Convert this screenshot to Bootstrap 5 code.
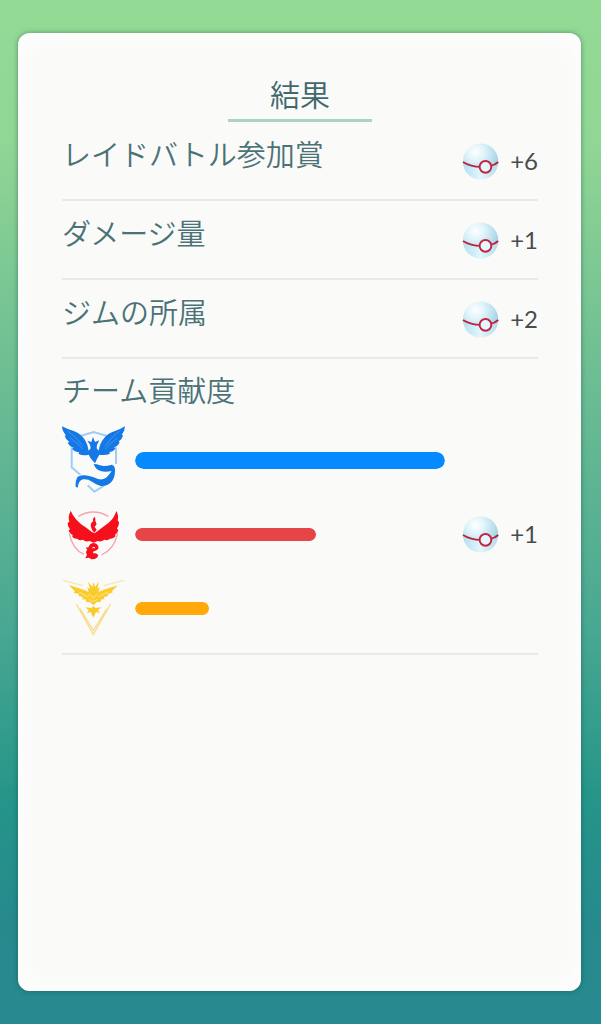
<!DOCTYPE html>
<html lang="ja">
<head>
<meta charset="utf-8">
<meta name="viewport" content="width=device-width, initial-scale=1">
<title>結果</title>
<link href="https://cdn.jsdelivr.net/npm/bootstrap@5.3.0/dist/css/bootstrap.min.css" rel="stylesheet">
<style>
  body {
    font-family: Lato, "Noto Sans CJK JP", sans-serif;
    background: linear-gradient(#93da95 0%, #90d694 14%, #6fbf93 35%, #4ba992 60%, #259589 78%, #268a8d 90%, #268a90 100%);
    padding: 33px 20px 33px 18px;
  }
  .result-card {
    border-radius: 12px;
    background: #fafaf9;
    padding: 40px 43px 40px 44px;
    box-shadow: 0 0 5px rgba(20, 70, 60, .5), inset 0 0 28px #fff;
  }
  .result-title {
    font-family: "Noto Sans CJK JP DemiLight", "Noto Sans CJK JP", sans-serif;
    font-size: 30px;
    line-height: 40px;
    font-weight: 350;
    color: #41686d;
    padding: 0 42px 6px;
    border-bottom: 3px solid #aed2c0;
  }
  .result-label {
    font-family: "Noto Sans CJK JP DemiLight", "Noto Sans CJK JP", sans-serif;
    font-size: 29px;
    line-height: 36px;
    font-weight: 350;
    color: #4b7277;
  }
  .result-row { min-height: 79px; border-bottom: 2px solid #e8eaea; }
  .result-row .result-label { padding-bottom: 16px; }
  .team-block { padding: 12px 0 8px; border-bottom: 2px solid #e8eaea; }
  .team-row { height: 74px; gap: 9px; }
  .reward { width: 76px; gap: 11px; font-size: 24px; color: #484c4e; }
  .team-row .reward { margin-left: 8px; }
  .track { height: 17px; background: none; border-radius: 9px; }
  .track-slim { height: 13px; }
  .track .progress-bar { border-radius: 9px; }
  .mystic { background: #058aff; }
  .valor { background: #e64547; }
  .instinct { background: #ffa90a; }
</style>
</head>
<body class="min-vh-100 d-flex">
<svg width="0" height="0" class="position-absolute" aria-hidden="true">
  <defs>
    <radialGradient id="shell" cx=".36" cy=".25" r=".8">
      <stop offset="0" stop-color="#fff"/>
      <stop offset=".3" stop-color="#e2f4fb"/>
      <stop offset=".7" stop-color="#b4dcea"/>
      <stop offset="1" stop-color="#8fc4da"/>
    </radialGradient>
    <linearGradient id="base" x1="0" y1="0" x2="1" y2="0">
      <stop offset="0" stop-color="#b5e0f0"/>
      <stop offset=".5" stop-color="#e3f6fc"/>
      <stop offset="1" stop-color="#b3dced"/>
    </linearGradient>
    <symbol id="ball" viewBox="0 0 38 38">
      <circle cx="19" cy="19" r="18" fill="url(#shell)"/>
      <path d="M1 20Q10 25 19 25L31 24Q35 22 37 20A18 18 0 0 1 1 20Z" fill="url(#base)"/>
      <path d="M1 20Q9 25 19 25M29 24Q34 23 37 20" fill="none" stroke="#b92442" stroke-width="2"/>
      <circle cx="24" cy="25" r="6" fill="#e6f6fc" stroke="#c22542" stroke-width="2"/>
    </symbol>
  </defs>
</svg>
<main class="result-card flex-grow-1">
  <header class="text-center"><h1 class="result-title d-inline-block mb-0 align-top">結果</h1></header>

  <section class="result-row d-flex align-items-center justify-content-between">
    <h2 class="result-label mb-0">レイドバトル参加賞</h2>
    <div class="reward d-flex align-items-center"><svg width="38" height="38" aria-hidden="true"><use href="#ball"/></svg><span>+6</span></div>
  </section>
  <section class="result-row d-flex align-items-center justify-content-between">
    <h2 class="result-label mb-0">ダメージ量</h2>
    <div class="reward d-flex align-items-center"><svg width="38" height="38" aria-hidden="true"><use href="#ball"/></svg><span>+1</span></div>
  </section>
  <section class="result-row d-flex align-items-center justify-content-between">
    <h2 class="result-label mb-0">ジムの所属</h2>
    <div class="reward d-flex align-items-center"><svg width="38" height="38" aria-hidden="true"><use href="#ball"/></svg><span>+2</span></div>
  </section>

  <section class="team-block">
    <h2 class="result-label mb-3">チーム貢献度</h2>

    <div class="team-row d-flex align-items-center">
      <svg class="flex-shrink-0" width="64" height="72" viewBox="21 30 192 216" aria-hidden="true">
        <path d="M76 66L116 54L156 66M50 100V160L76 182M98 214L118 233L146 216M183 100V150" fill="none" stroke="#9fcdf8" stroke-width="6"/>
        <g fill="#1478e6">
          <path d="M21 37Q38 46 58 52Q78 60 90 78Q98 91 101 110L107 103L105 92L97 80L109 84L114 69L120 84L133 79L126 92L125 103L131 110Q134 88 146 74Q158 58 178 52Q196 46 210 37Q209 53 200 63L204 64Q201 77 191 82L194 85Q189 97 178 100L181 104Q174 114 163 115L165 119Q150 125 133 122L127 133L120 148L108 134L101 122Q84 127 70 119L73 115Q59 114 51 104L56 101Q44 98 38 86L43 84Q32 77 29 65L33 64Q22 53 21 37Z"/>
          <path d="M116 150Q125 150 135 154Q150 159 170 152Q181 154 180 172Q180 192 169 204Q156 218 137 216Q123 212 111 203Q98 194 84 196Q70 200 68 221L62 218Q61 198 68 188Q82 182 99 185Q114 188 129 195Q145 199 155 190Q163 182 170 171Q151 176 137 171Q122 167 116 150Z"/>
        </g>
        <path d="M38 51Q66 70 84 97M45 71Q66 85 83 105M193 51Q168 70 150 97M187 72Q168 86 151 105" fill="none" stroke="#5aa4f2" stroke-width="2"/>
      </svg>
      <div class="progress track flex-grow-1" role="progressbar" aria-label="Mystic" aria-valuenow="100" aria-valuemin="0" aria-valuemax="100"><div class="progress-bar mystic" style="width:100%"></div></div>
      <div class="reward flex-shrink-0"></div>
    </div>

    <div class="team-row d-flex align-items-center">
      <svg class="flex-shrink-0" width="64" height="64" viewBox="21 9 192 192" aria-hidden="true">
        <path d="M70 52Q115 26 160 52M43 103Q52 151 87 166M188 103Q178 151 139 168" fill="none" stroke="#f7a3ab" stroke-width="4"/>
        <g fill="#f5101c">
          <path d="M47 35Q53 49 63 61Q76 77 96 88L109 98L119 103L131 94Q145 83 160 72Q178 57 184 36Q192 50 188 64L192 70Q193 80 186 89L190 93Q188 103 180 107L182 112Q174 121 164 119Q160 126 148 122Q138 130 128 126L116 131L104 126Q91 130 84 122Q72 126 67 119Q55 121 51 111L54 108Q43 104 41 94L45 91Q37 82 38 72L43 68Q38 54 47 35Z"/>
          <path d="M119 53Q111 60 115 67Q105 72 108 84Q110 94 118 101L125 92L119 84L125 75L121 66Q122 58 119 53Z"/>
          <path d="M106 135Q120 128 128 138Q136 151 121 155Q110 158 116 163Q126 161 130 169Q126 182 110 181L101 176L91 178L96 167Q90 159 97 152L92 146L100 145Z"/>
        </g>
        <path d="M112 147Q118 143 120 147" fill="none" stroke="#fff" stroke-width="3"/>
      </svg>
      <div class="progress track track-slim flex-grow-1" role="progressbar" aria-label="Valor" aria-valuenow="58" aria-valuemin="0" aria-valuemax="100"><div class="progress-bar valor" style="width:58.4%"></div></div>
      <div class="reward d-flex align-items-center flex-shrink-0"><svg width="38" height="38" aria-hidden="true"><use href="#ball"/></svg><span>+1</span></div>
    </div>

    <div class="team-row d-flex align-items-center">
      <svg class="flex-shrink-0" width="64" height="64" viewBox="21 24 192 192" aria-hidden="true">
        <path d="M24 37L84 53M206 37L146 53" fill="none" stroke="#f9e7b0" stroke-width="4"/>
        <path d="M64 108L115 199L167 108M75 122L115 187L156 122" fill="none" stroke="#f8dc8c" stroke-width="4"/>
        <g fill="#fbcb2c">
          <path d="M41 51L88 66L101 72L97 58L105 63L99 41L112 57L116 41L120 57L132 41L127 63L135 58L130 72L144 66L189 52L171 69L174 73L157 79L161 84L146 87L149 94L139 94L136 102L126 102L115 111L104 102L94 102L91 94L81 94L84 87L70 84L73 79L56 74L60 70Z"/>
          <path d="M91 118L109 120L115 114L121 120L139 118L129 127L134 135L123 132L115 149L107 132L96 136L101 127Z"/>
        </g>
        <path d="M72 72L98 86L105 79L115 91L125 79L132 86L158 72M102 94L115 101L128 94" fill="none" stroke="#fde58e" stroke-width="3"/>
      </svg>
      <div class="progress track track-slim flex-grow-1" role="progressbar" aria-label="Instinct" aria-valuenow="24" aria-valuemin="0" aria-valuemax="100"><div class="progress-bar instinct" style="width:23.9%"></div></div>
      <div class="reward flex-shrink-0"></div>
    </div>
  </section>
</main>
<script src="https://cdn.jsdelivr.net/npm/bootstrap@5.3.0/dist/js/bootstrap.bundle.min.js"></script>
</body>
</html>
